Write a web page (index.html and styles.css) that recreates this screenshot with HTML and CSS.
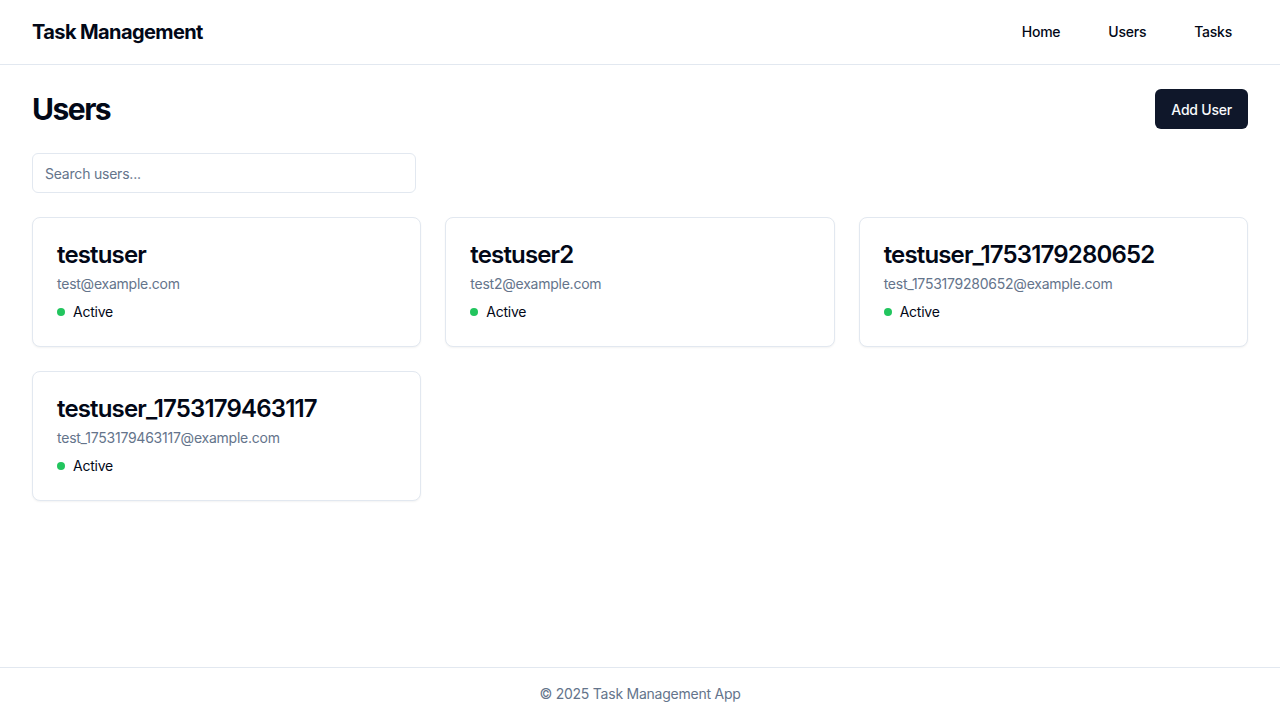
FILE: index.html
```html
<!DOCTYPE html>
<html lang="en">
<head>
<meta charset="utf-8">
<title>Task Management</title>
<link rel="stylesheet" href="styles.css">
</head>
<body>
<div class="app">
  <header class="topbar">
    <div class="brand">Task Management</div>
    <nav class="nav">
      <a class="nav-link" href="#">Home</a>
      <a class="nav-link" href="#">Users</a>
      <a class="nav-link" href="#">Tasks</a>
    </nav>
  </header>
  <main class="main">
    <div class="page-head">
      <h1 class="page-title">Users</h1>
      <button class="btn-primary">Add User</button>
    </div>
    <div class="search-wrap">
      <input class="search" type="text" placeholder="Search users...">
    </div>
    <div class="grid">
      <div class="card">
        <h3 class="card-title">testuser</h3>
        <p class="card-email">test@example.com</p>
        <div class="status"><span class="dot"></span>Active</div>
      </div>
      <div class="card">
        <h3 class="card-title">testuser2</h3>
        <p class="card-email">test2@example.com</p>
        <div class="status"><span class="dot"></span>Active</div>
      </div>
      <div class="card">
        <h3 class="card-title">testuser_1753179280652</h3>
        <p class="card-email">test_1753179280652@example.com</p>
        <div class="status"><span class="dot"></span>Active</div>
      </div>
      <div class="card">
        <h3 class="card-title">testuser_1753179463117</h3>
        <p class="card-email">test_1753179463117@example.com</p>
        <div class="status"><span class="dot"></span>Active</div>
      </div>
    </div>
  </main>
  <footer class="footer">© 2025 Task Management App</footer>
</div>
</body>
</html>
```
FILE: styles.css
```css
* { box-sizing: border-box; }
html, body { margin: 0; padding: 0; }
body {
  font-family: Inter, "Noto Sans", sans-serif;
  color: #020817;
  background: #ffffff;
  letter-spacing: -0.015em;
}
.app {
  min-height: 100vh;
  display: flex;
  flex-direction: column;
}
.topbar {
  height: 65px;
  border-bottom: 1px solid #e2e8f0;
  display: flex;
  align-items: center;
  justify-content: space-between;
  padding: 0 32px;
}
.brand {
  font-size: 20px;
  line-height: 28px;
  font-weight: 700;
  letter-spacing: -0.03em;
}
.nav {
  display: flex;
  gap: 16px;
}
.nav-link {
  font-size: 14px;
  line-height: 20px;
  font-weight: 500;
  color: #020817;
  text-decoration: none;
  padding: 8px 16px;
  border-radius: 6px;
}
.main {
  flex: 1;
  padding: 24px 32px;
}
.page-head {
  display: flex;
  align-items: center;
  justify-content: space-between;
  margin-bottom: 24px;
}
.page-title {
  margin: 0;
  font-size: 30px;
  line-height: 36px;
  font-weight: 700;
  letter-spacing: -0.05em;
}
.btn-primary {
  height: 40px;
  padding: 0 16px;
  border: none;
  border-radius: 6px;
  background: #0f172a;
  color: #f8fafc;
  font-family: inherit;
  font-size: 14px;
  font-weight: 500;
  letter-spacing: -0.015em;
}
.search-wrap { margin-bottom: 24px; }
.search {
  width: 384px;
  height: 40px;
  border: 1px solid #e2e8f0;
  border-radius: 6px;
  padding: 0 12px;
  font-family: inherit;
  font-size: 14px;
  letter-spacing: -0.015em;
  color: #020817;
  background: #fff;
  outline: none;
}
.search::placeholder { color: #64748b; }
.grid {
  display: grid;
  grid-template-columns: repeat(3, 1fr);
  gap: 24px;
}
.card {
  border: 1px solid #e2e8f0;
  border-radius: 8px;
  padding: 24px;
  background: #fff;
  box-shadow: 0 1px 2px rgba(0,0,0,0.05);
}
.card-title {
  margin: 0;
  font-size: 24px;
  line-height: 26px;
  font-weight: 600;
  letter-spacing: -0.035em;
}
.card-email {
  margin: 6px 0 0;
  font-size: 14px;
  line-height: 20px;
  color: #64748b;
}
.status {
  margin-top: 8px;
  display: flex;
  align-items: center;
  gap: 8px;
  font-size: 14px;
  line-height: 20px;
}
.dot {
  width: 8px;
  height: 8px;
  border-radius: 50%;
  background: #22c55e;
}
.footer {
  border-top: 1px solid #e2e8f0;
  padding: 16px 0;
  text-align: center;
  font-size: 14px;
  line-height: 20px;
  color: #64748b;
}
```
